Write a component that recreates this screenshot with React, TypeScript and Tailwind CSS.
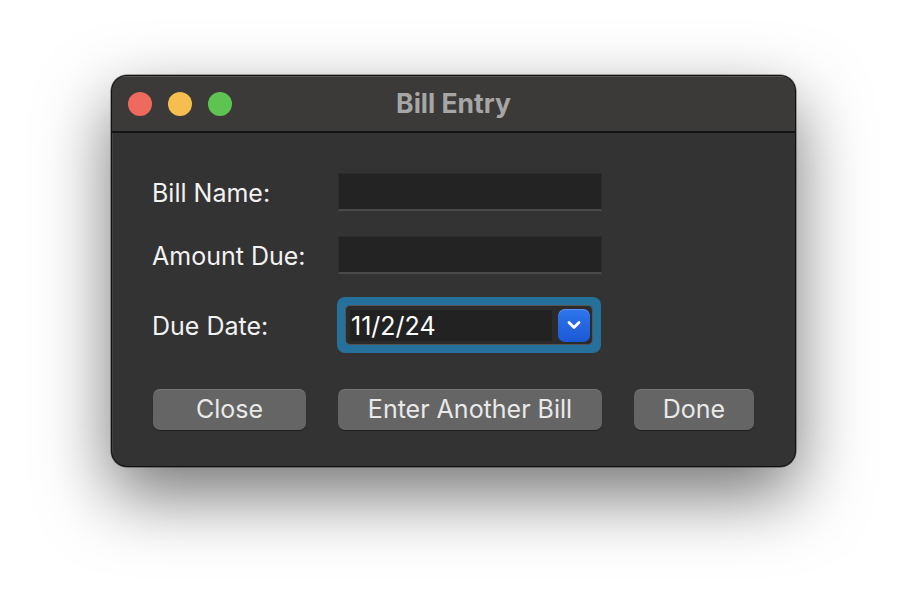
import React from "react";

function Field({ label }: { label: string }) {
  return (
    <div className="flex items-center h-[38px]">
      <div className="w-[186px] text-[25px] text-[#f2f2f2] leading-none pt-[3px]">{label}</div>
      <div className="w-[264px] h-[38px] bg-[#232323] border-t border-x border-[#2c2c2c] border-b-2 border-b-[#4a4a4a]" />
    </div>
  );
}

function Btn({ label, w }: { label: string; w: string }) {
  return (
    <div
      className={`${w} h-[41px] rounded-[7px] bg-[#656565] shadow-[inset_0_1px_0_rgba(255,255,255,0.12),0_1px_1px_rgba(0,0,0,0.35)] flex items-center justify-center text-[25px] text-[#e9e9e9] leading-none`}
    >
      {label}
    </div>
  );
}

export default function App() {
  return (
    <div
      className="w-[908px] h-[616px] bg-white pt-[75px] pl-[111px]"
      style={{ fontFamily: "Inter, 'Noto Sans', sans-serif" }}
    >
      <div className="w-[685px] h-[392px] rounded-[16px] bg-[#333333] border border-[#111] shadow-[0_28px_70px_rgba(0,0,0,0.55),0_0_0_0.5px_rgba(0,0,0,0.6)] overflow-hidden flex flex-col">
        <div className="h-[57px] bg-[#3b3a39] border-b-2 border-[#141414] shadow-[inset_0_1px_0_rgba(255,255,255,0.15)] relative flex items-center">
          <div className="flex items-center gap-[16px] pl-[16px]">
            <div className="w-[24px] h-[24px] rounded-full bg-[#ee6a5e]" />
            <div className="w-[24px] h-[24px] rounded-full bg-[#f5bf4f]" />
            <div className="w-[24px] h-[24px] rounded-full bg-[#5dc451]" />
          </div>
          <div className="absolute inset-0 flex items-center justify-center text-[26.5px] font-bold text-[#a6a6a6] leading-none">
            Bill Entry
          </div>
        </div>
        <div className="flex-1 pl-[40px] pt-[40px] shadow-[inset_1px_0_0_rgba(255,255,255,0.08)]">
          <div className="flex flex-col gap-[25px]">
            <Field label="Bill Name:" />
            <Field label="Amount Due:" />
          </div>
          <div className="flex items-center mt-[23px]">
            <div className="w-[185px] text-[25px] text-[#f2f2f2] leading-none pt-[3px]">Due Date:</div>
            <div className="w-[264px] h-[56px] rounded-[8px] bg-[#26709c] p-[8px]">
              <div className="h-[40px] rounded-[5px] bg-[#2b2b2b] border border-[#555] flex items-center pl-[4px] pr-[2px] gap-[6px]">
                <div className="w-[202px] h-[31px] bg-[#222] flex items-center pl-[1px] pt-[2px] text-[25px] text-white leading-none">
                  11/2/24
                </div>
                <div className="w-[32px] h-[33px] rounded-[7px] bg-gradient-to-b from-[#2f76ec] to-[#1c58d6] shadow-[inset_0_1px_0_rgba(255,255,255,0.2)] flex items-center justify-center">
                  <svg width="16" height="12" viewBox="0 0 16 12">
                    <path d="M3 3.5 L8 8.5 L13 3.5" stroke="white" strokeWidth="2.8" fill="none" strokeLinecap="round" strokeLinejoin="round" />
                  </svg>
                </div>
              </div>
            </div>
          </div>
          <div className="flex items-center mt-[36px] ml-[1px]">
            <Btn label="Close" w="w-[153px]" />
            <div className="w-[32px]" />
            <Btn label="Enter Another Bill" w="w-[264px]" />
            <div className="w-[32px]" />
            <Btn label="Done" w="w-[120px]" />
          </div>
        </div>
      </div>
    </div>
  );
}
